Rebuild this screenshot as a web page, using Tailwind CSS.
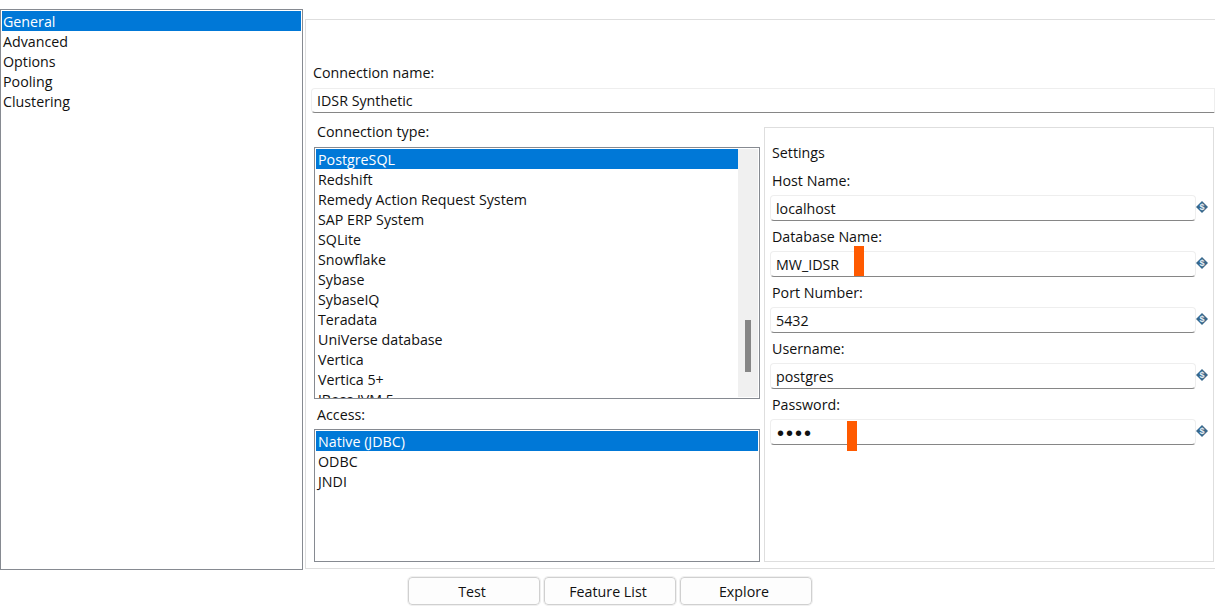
<!DOCTYPE html>
<html><head><meta charset="utf-8"><script src="https://cdn.jsdelivr.net/npm/@tailwindcss/browser@4"></script></head>
<body class="bg-white">
<div class="relative w-[1215px] h-[612px] overflow-hidden bg-white text-[14.25px] leading-[22px] text-[#111] font-['Open_Sans','Noto_Sans',sans-serif]">
  <div class="flex items-start">
    <div class="mt-[9px] w-[303px] h-[561px] border border-[#868a91] px-px py-px">
      <div class="bg-[#0078d7] text-white pl-[1px] h-5">General</div>
      <div class="pl-[1px] h-5">Advanced</div>
      <div class="pl-[1px] h-5">Options</div>
      <div class="pl-[1px] h-5">Pooling</div>
      <div class="pl-[1px] h-5">Clustering</div>
    </div>
    <div class="ml-[2px] mt-[19px] flex-1 h-[550px] border-t border-l border-b border-[#dedede] pl-[5px]">
      <div class="pt-[42px] pl-[2px] h-[68px] flex items-end pb-[4px]">Connection name:</div>
      <div class="h-[25px] border border-[#eeeeee] border-b-[#868686] rounded-l-sm pl-[5px] leading-[23px]">IDSR Synthetic</div>
      <div class="flex mt-[9px]">
        <div class="w-[446px] ml-[3px] shrink-0">
          <div class="pl-[3px] h-5 leading-[20px]">Connection type:</div>
          <div class="mt-[5px] h-[252px] border border-[#868a91] flex p-px overflow-hidden">
            <div class="w-[422px] overflow-hidden h-[249px]">
              <div class="bg-[#0078d7] text-white pl-[2px] h-5">PostgreSQL</div>
              <div class="pl-[2px] h-5">Redshift</div>
              <div class="pl-[2px] h-5">Remedy Action Request System</div>
              <div class="pl-[2px] h-5">SAP ERP System</div>
              <div class="pl-[2px] h-5">SQLite</div>
              <div class="pl-[2px] h-5">Snowflake</div>
              <div class="pl-[2px] h-5">Sybase</div>
              <div class="pl-[2px] h-5">SybaseIQ</div>
              <div class="pl-[2px] h-5">Teradata</div>
              <div class="pl-[2px] h-5">UniVerse database</div>
              <div class="pl-[2px] h-5">Vertica</div>
              <div class="pl-[2px] h-5">Vertica 5+</div>
              <div class="pl-[2px] h-5">JBoss JVM 5</div>
            </div>
            <div class="w-5 h-[248px] bg-[#f0f0f0] flex justify-center pt-[171px]">
              <div class="w-[6px] h-[52px] bg-[#868686]"></div>
            </div>
          </div>
          <div class="pl-[3px] h-5 mt-[6px] leading-[20px]">Access:</div>
          <div class="mt-[4px] h-[133px] border border-[#868a91] p-px">
            <div class="bg-[#0078d7] text-white pl-[2px] h-5">Native (JDBC)</div>
            <div class="pl-[2px] h-5">ODBC</div>
            <div class="pl-[2px] h-5">JNDI</div>
          </div>
        </div>
        <div class="ml-[4px] mt-[5px] w-[450px] h-[435px] border border-[#dedede] pl-[5px]">
          <div class="pl-[2px] pt-[14px] h-[39px]">Settings</div>
          <div class="flex flex-col">
            <div class="pl-[2px] h-[28px] pt-[3px]">Host Name:</div>
            <div class="flex items-start">
              <div class="w-[426px] h-[26px] border border-[#eeeeee] border-b-[#868686] rounded-sm pl-[5px] leading-[25px]">localhost</div>
              <svg class="mt-[6px]" width="12" height="12" viewBox="0 0 12 12"><path d="M6 0 12 6 6 12 0 6Z" fill="#38688c"/><text x="6" y="9.2" text-anchor="middle" font-size="9" font-weight="700" fill="#e6eef4" font-family="Liberation Sans">$</text></svg>
            </div>
            <div class="pl-[2px] h-[30px] pt-[5px]">Database Name:</div>
            <div class="flex items-start">
              <div class="w-[426px] h-[26px] border border-[#eeeeee] border-b-[#868686] rounded-sm pl-[5px] leading-[25px]">MW_IDSR</div>
              <svg class="mt-[6px]" width="12" height="12" viewBox="0 0 12 12"><path d="M6 0 12 6 6 12 0 6Z" fill="#38688c"/><text x="6" y="9.2" text-anchor="middle" font-size="9" font-weight="700" fill="#e6eef4" font-family="Liberation Sans">$</text></svg>
            </div>
            <div class="pl-[2px] h-[30px] pt-[5px]">Port Number:</div>
            <div class="flex items-start">
              <div class="w-[426px] h-[26px] border border-[#eeeeee] border-b-[#868686] rounded-sm pl-[5px] leading-[25px]">5432</div>
              <svg class="mt-[6px]" width="12" height="12" viewBox="0 0 12 12"><path d="M6 0 12 6 6 12 0 6Z" fill="#38688c"/><text x="6" y="9.2" text-anchor="middle" font-size="9" font-weight="700" fill="#e6eef4" font-family="Liberation Sans">$</text></svg>
            </div>
            <div class="pl-[2px] h-[30px] pt-[5px]">Username:</div>
            <div class="flex items-start">
              <div class="w-[426px] h-[26px] border border-[#eeeeee] border-b-[#868686] rounded-sm pl-[5px] leading-[25px]">postgres</div>
              <svg class="mt-[6px]" width="12" height="12" viewBox="0 0 12 12"><path d="M6 0 12 6 6 12 0 6Z" fill="#38688c"/><text x="6" y="9.2" text-anchor="middle" font-size="9" font-weight="700" fill="#e6eef4" font-family="Liberation Sans">$</text></svg>
            </div>
            <div class="pl-[2px] h-[30px] pt-[5px]">Password:</div>
            <div class="flex items-start">
              <div class="w-[426px] h-[26px] border border-[#eeeeee] border-b-[#868686] rounded-sm pl-[6px] leading-[27px] text-[20px] tracking-[2px] font-['Liberation_Sans',sans-serif]">••••</div>
              <svg class="mt-[6px]" width="12" height="12" viewBox="0 0 12 12"><path d="M6 0 12 6 6 12 0 6Z" fill="#38688c"/><text x="6" y="9.2" text-anchor="middle" font-size="9" font-weight="700" fill="#e6eef4" font-family="Liberation Sans">$</text></svg>
            </div>
          </div>
        </div>
      </div>
    </div>
  </div>
  <div class="flex justify-center gap-[4px] mt-[7px] pl-[5px] w-[1215px]">
    <div class="w-[132px] h-[28px] border border-[#d0d0d0] rounded-[4px] bg-[#fdfdfd] text-center pr-[4px] leading-[28px] outline outline-[#f0f0f0]">Test</div>
    <div class="w-[132px] h-[28px] border border-[#d0d0d0] rounded-[4px] bg-[#fdfdfd] text-center pr-[4px] leading-[28px] outline outline-[#f0f0f0]">Feature List</div>
    <div class="w-[132px] h-[28px] border border-[#d0d0d0] rounded-[4px] bg-[#fdfdfd] text-center pr-[4px] leading-[28px] outline outline-[#f0f0f0]">Explore</div>
  </div>
  <div class="absolute left-[854px] top-[246px] w-[10px] h-[30px] bg-[#ff5a00]"></div>
  <div class="absolute left-[847px] top-[421px] w-[10px] h-[30px] bg-[#ff5a00]"></div>
</div>
</body></html>
